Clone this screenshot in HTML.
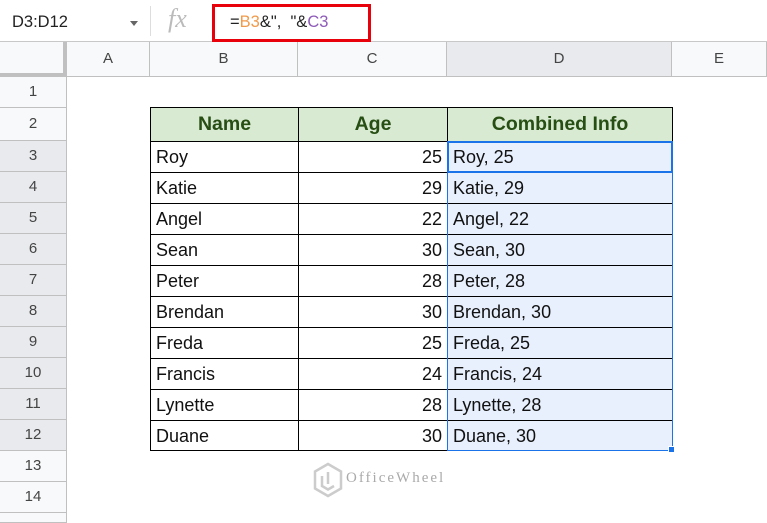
<!DOCTYPE html>
<html><head><meta charset="utf-8"><style>
*{margin:0;padding:0;box-sizing:border-box}
body{width:767px;height:518px;overflow:hidden;background:#fff;font-family:"Liberation Sans",Arial,sans-serif;position:relative}
.a{position:absolute}
.ch{position:absolute;top:42px;height:35px;background:#f8f9fa;border-right:1px solid #c0c0c0;border-bottom:1px solid #c0c0c0;color:#444;font-size:15px;text-align:center;line-height:34px}
.rh{position:absolute;left:0;width:67px;background:#f8f9fa;border-bottom:1px solid #c0c0c0;border-right:1px solid #c0c0c0;color:#444;font-size:15px;text-align:center}
.rh.s{background:#e8eaed}
.c{position:absolute;border:1px solid #000;font-size:18px;color:#111;padding:0 5px;line-height:30px;white-space:nowrap}
.h{background:#d9ead3;color:#274e13;font-weight:bold;font-size:19.5px;text-align:center;line-height:33px}
.r{text-align:right}
.d{background:#e8f0fe;padding-left:5px}
</style></head><body>
<div class="a" style="left:0;top:0;width:767px;height:42px;border-bottom:1px solid #c8c8c8"></div>
<div class="a" style="left:12px;top:13px;font-size:16.5px;color:#222">D3:D12</div>
<div class="a" style="left:130px;top:21px;width:0;height:0;border-left:4px solid transparent;border-right:4px solid transparent;border-top:5px solid #666"></div>
<div class="a" style="left:150px;top:6px;width:1px;height:30px;background:#ddd"></div>
<div class="a" style="left:168px;top:4px;font-family:'Liberation Serif',serif;font-style:italic;font-size:26px;color:#bbb">fx</div>
<div class="a" style="left:212px;top:4px;width:159px;height:38px;border:3px solid #e8000b"></div>
<div class="a" style="left:230px;top:13px;font-size:16.5px;color:#222;white-space:pre">=<span style="color:#f09a4a">B3</span>&amp;",  "&amp;<span style="color:#8e5bb8">C3</span></div>
<div class="ch" style="left:0;width:67px;border-right:4px solid #c0c0c0;border-bottom:4px solid #c0c0c0;height:35px"></div>
<div class="ch" style="left:67px;width:83px">A</div>
<div class="ch" style="left:150px;width:148px">B</div>
<div class="ch" style="left:298px;width:149px">C</div>
<div class="ch" style="left:447px;width:225px;background:#e8eaed">D</div>
<div class="ch" style="left:672px;width:95px">E</div>
<div class="rh" style="top:77px;height:31px;line-height:30px">1</div>
<div class="rh" style="top:108px;height:33px;line-height:32px">2</div>
<div class="rh s" style="top:141px;height:31px;line-height:30px">3</div>
<div class="rh s" style="top:172px;height:31px;line-height:30px">4</div>
<div class="rh s" style="top:203px;height:31px;line-height:30px">5</div>
<div class="rh s" style="top:234px;height:31px;line-height:30px">6</div>
<div class="rh s" style="top:265px;height:31px;line-height:30px">7</div>
<div class="rh s" style="top:296px;height:31px;line-height:30px">8</div>
<div class="rh s" style="top:327px;height:31px;line-height:30px">9</div>
<div class="rh s" style="top:358px;height:31px;line-height:30px">10</div>
<div class="rh s" style="top:389px;height:31px;line-height:30px">11</div>
<div class="rh s" style="top:420px;height:31px;line-height:30px">12</div>
<div class="rh" style="top:451px;height:31px;line-height:30px">13</div>
<div class="rh" style="top:482px;height:31px;line-height:30px">14</div>
<div class="rh" style="top:513px;height:10px"></div>
<div class="c h" style="left:150px;top:107px;width:149px;height:35px">Name</div>
<div class="c h" style="left:298px;top:107px;width:150px;height:35px">Age</div>
<div class="c h" style="left:447px;top:107px;width:226px;height:35px">Combined Info</div>
<div class="c" style="left:150px;top:141px;width:149px;height:32px">Roy</div><div class="c r" style="left:298px;top:141px;width:150px;height:32px">25</div><div class="c d" style="left:447px;top:141px;width:226px;height:32px">Roy, 25</div>
<div class="c" style="left:150px;top:172px;width:149px;height:32px">Katie</div><div class="c r" style="left:298px;top:172px;width:150px;height:32px">29</div><div class="c d" style="left:447px;top:172px;width:226px;height:32px">Katie, 29</div>
<div class="c" style="left:150px;top:203px;width:149px;height:32px">Angel</div><div class="c r" style="left:298px;top:203px;width:150px;height:32px">22</div><div class="c d" style="left:447px;top:203px;width:226px;height:32px">Angel, 22</div>
<div class="c" style="left:150px;top:234px;width:149px;height:32px">Sean</div><div class="c r" style="left:298px;top:234px;width:150px;height:32px">30</div><div class="c d" style="left:447px;top:234px;width:226px;height:32px">Sean, 30</div>
<div class="c" style="left:150px;top:265px;width:149px;height:32px">Peter</div><div class="c r" style="left:298px;top:265px;width:150px;height:32px">28</div><div class="c d" style="left:447px;top:265px;width:226px;height:32px">Peter, 28</div>
<div class="c" style="left:150px;top:296px;width:149px;height:32px">Brendan</div><div class="c r" style="left:298px;top:296px;width:150px;height:32px">30</div><div class="c d" style="left:447px;top:296px;width:226px;height:32px">Brendan, 30</div>
<div class="c" style="left:150px;top:327px;width:149px;height:32px">Freda</div><div class="c r" style="left:298px;top:327px;width:150px;height:32px">25</div><div class="c d" style="left:447px;top:327px;width:226px;height:32px">Freda, 25</div>
<div class="c" style="left:150px;top:358px;width:149px;height:32px">Francis</div><div class="c r" style="left:298px;top:358px;width:150px;height:32px">24</div><div class="c d" style="left:447px;top:358px;width:226px;height:32px">Francis, 24</div>
<div class="c" style="left:150px;top:389px;width:149px;height:32px">Lynette</div><div class="c r" style="left:298px;top:389px;width:150px;height:32px">28</div><div class="c d" style="left:447px;top:389px;width:226px;height:32px">Lynette, 28</div>
<div class="c" style="left:150px;top:420px;width:149px;height:31px">Duane</div><div class="c r" style="left:298px;top:420px;width:150px;height:31px">30</div><div class="c d" style="left:447px;top:420px;width:226px;height:31px">Duane, 30</div>
<div class="a" style="left:447px;top:141px;width:226px;height:310px;border:1px solid #1a73e8"></div>
<div class="a" style="left:447px;top:141px;width:226px;height:32px;border:2px solid #1a73e8"></div>
<div class="a" style="left:668px;top:446px;width:7px;height:7px;background:#1a73e8;border:1px solid #fff"></div>
<svg class="a" style="left:312px;top:462px" width="32" height="36" viewBox="0 0 32 36"><path d="M16 2 L29 9.5 V26.5 L16 34 L3 26.5 V9.5 Z" fill="none" stroke="#ccc" stroke-width="2.5"/><path d="M10 14 V24 L16 27.5 L22 24 M16 10 V22" fill="none" stroke="#ccc" stroke-width="2.5"/></svg>
<div class="a" style="left:346px;top:470px;font-family:'Liberation Serif',serif;font-size:15px;letter-spacing:2px;color:#aaa">OfficeWheel</div>
</body></html>
